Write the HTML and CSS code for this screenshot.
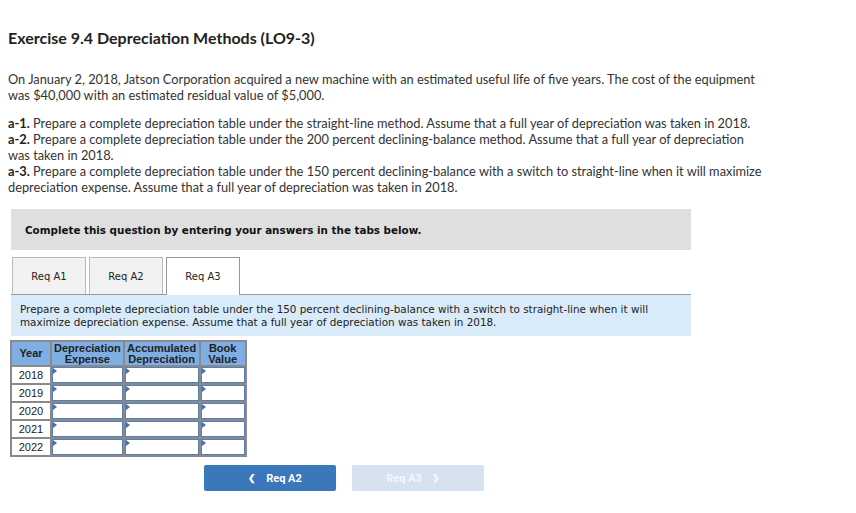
FILE: index.html
```html
<!DOCTYPE html>
<html>
<head>
<meta charset="utf-8">
<link rel="stylesheet" href="styles.css">
</head>
<body>
<div class="page">
  <h1 class="title">Exercise 9.4 Depreciation Methods (LO9-3)</h1>
  <p class="intro">On January 2, 2018, Jatson Corporation acquired a new machine with an estimated useful life of five years. The cost of the equipment was $40,000 with an estimated residual value of $5,000.</p>
  <div class="reqs">
    <div class="req"><b>a-1.</b> Prepare a complete depreciation table under the straight-line method. Assume that a full year of depreciation was taken in 2018.</div>
    <div class="req"><b>a-2.</b> Prepare a complete depreciation table under the 200 percent declining-balance method. Assume that a full year of depreciation<br>was taken in 2018.</div>
    <div class="req"><b>a-3.</b> Prepare a complete depreciation table under the 150 percent declining-balance with a switch to straight-line when it will maximize depreciation expense. Assume that a full year of depreciation was taken in 2018.</div>
  </div>

  <div class="widget">
    <div class="banner">Complete this question by entering your answers in the tabs below.</div>
    <div class="tabs">
      <div class="tab">Req A1</div>
      <div class="tab">Req A2</div>
      <div class="tab active">Req A3</div>
    </div>
    <div class="instr">Prepare a complete depreciation table under the 150 percent declining-balance with a switch to straight-line when it will maximize depreciation expense. Assume that a full year of depreciation was taken in 2018.</div>
    <table class="dep">
      <thead>
        <tr><th class="c-year">Year</th><th class="c-exp">Depreciation<br>Expense</th><th class="c-acc">Accumulated<br>Depreciation</th><th class="c-book">Book<br>Value</th></tr>
      </thead>
      <tbody>
        <tr><td class="yr">2018</td><td class="in"></td><td class="in"></td><td class="in"></td></tr>
        <tr><td class="yr">2019</td><td class="in"></td><td class="in"></td><td class="in"></td></tr>
        <tr><td class="yr">2020</td><td class="in"></td><td class="in"></td><td class="in"></td></tr>
        <tr><td class="yr">2021</td><td class="in"></td><td class="in"></td><td class="in"></td></tr>
        <tr><td class="yr">2022</td><td class="in"></td><td class="in"></td><td class="in"></td></tr>
      </tbody>
    </table>
    <div class="nav">
      <div class="btn prev"><span class="chev">&#10094;</span>Req A2</div>
      <div class="btn next disabled">Req A3<span class="chev">&#10095;</span></div>
    </div>
  </div>
</div>
</body>
</html>
```

FILE: styles.css
```css
html, body { margin: 0; padding: 0; background: #fff; }
.page {
  padding: 0 8px;
  font-family: "Lato", "Liberation Sans", sans-serif;
  color: #333;
}
.title {
  margin: 0;
  padding-top: 29px;
  font-size: 16px;
  font-weight: 700;
  color: #222;
  line-height: 18px;
}
.intro {
  margin: 24px 0 0;
  font-size: 12.8px;
  line-height: 16px;
  width: 764px;
}
.reqs {
  margin: 12px 0 0;
  font-size: 12.8px;
  line-height: 16px;
  width: 764px;
}
.req b { font-weight: 700; color: #222; }
.widget {
  margin: 14px 0 0 3px;
  width: 680px;
}
.banner {
  background: #dfdfdf;
  height: 41px;
  display: flex;
  align-items: center;
  padding-left: 14px;
  font-family: "DejaVu Sans", Verdana, sans-serif;
  font-size: 10.35px;
  font-weight: 700;
  color: #111;
}
.tabs {
  display: flex;
  gap: 3px;
  margin-top: 7px;
  padding-left: 1px;
  border-bottom: 1px solid #999;
}
.tab {
  width: 72px;
  height: 36px;
  border: 1px solid #bbb;
  border-bottom: none;
  background: #f2f2f2;
  display: flex;
  align-items: center;
  justify-content: center;
  font-family: "DejaVu Sans", Verdana, sans-serif;
  font-size: 10px;
  color: #222;
}
.tab.active {
  background: #fff;
  border-color: #999;
  height: 37px;
  margin-bottom: -1px;
}
.instr {
  background: #d9ebf9;
  padding: 8px 9px 7px;
  font-family: "DejaVu Sans", Verdana, sans-serif;
  font-size: 10.4px;
  line-height: 13px;
  color: #222;
}
.dep {
  margin-top: 4px;
  margin-left: -1px;
  border-collapse: collapse;
  font-family: "Liberation Sans", Arial, sans-serif;
  font-size: 11px;
}
.dep th {
  background: #7eaee3;
  border: 2px solid #8a8a8a;
  font-weight: 700;
  color: #222;
  line-height: 11px;
  padding: 0 2px;
  height: 23px;
}
.c-year { width: 34px; }
.c-exp { width: 63px; }
.c-acc { width: 70px; }
.c-book { width: 40px; }
.dep td {
  border: 2px solid #8a8a8a;
  height: 16px;
  padding: 0;
}
.dep td.yr {
  text-align: center;
  color: #222;
  background: #fff;
}
.dep td.in {
  background: #fff;
  box-shadow: inset 0 0 0 1px #5a7fb3;
  position: relative;
}
.dep td.in::before {
  content: "";
  position: absolute;
  left: 1px;
  top: 1px;
  border-top: 3px solid transparent;
  border-bottom: 3px solid transparent;
  border-left: 4px solid #3a6fc4;
}
.nav {
  display: flex;
  gap: 16px;
  margin-top: 8px;
  padding-left: 193px;
}
.btn {
  width: 132px;
  height: 26px;
  border-radius: 2px;
  display: flex;
  align-items: center;
  justify-content: center;
  font-family: "Roboto", "Liberation Sans", sans-serif;
  font-size: 11px;
  font-weight: 700;
  color: #fff;
  background: #3a77bb;
}
.btn.disabled { background: #d6e2f0; color: #f4f7fb; }
.chev { font-size: 9px; margin: 0 10px; }
```
